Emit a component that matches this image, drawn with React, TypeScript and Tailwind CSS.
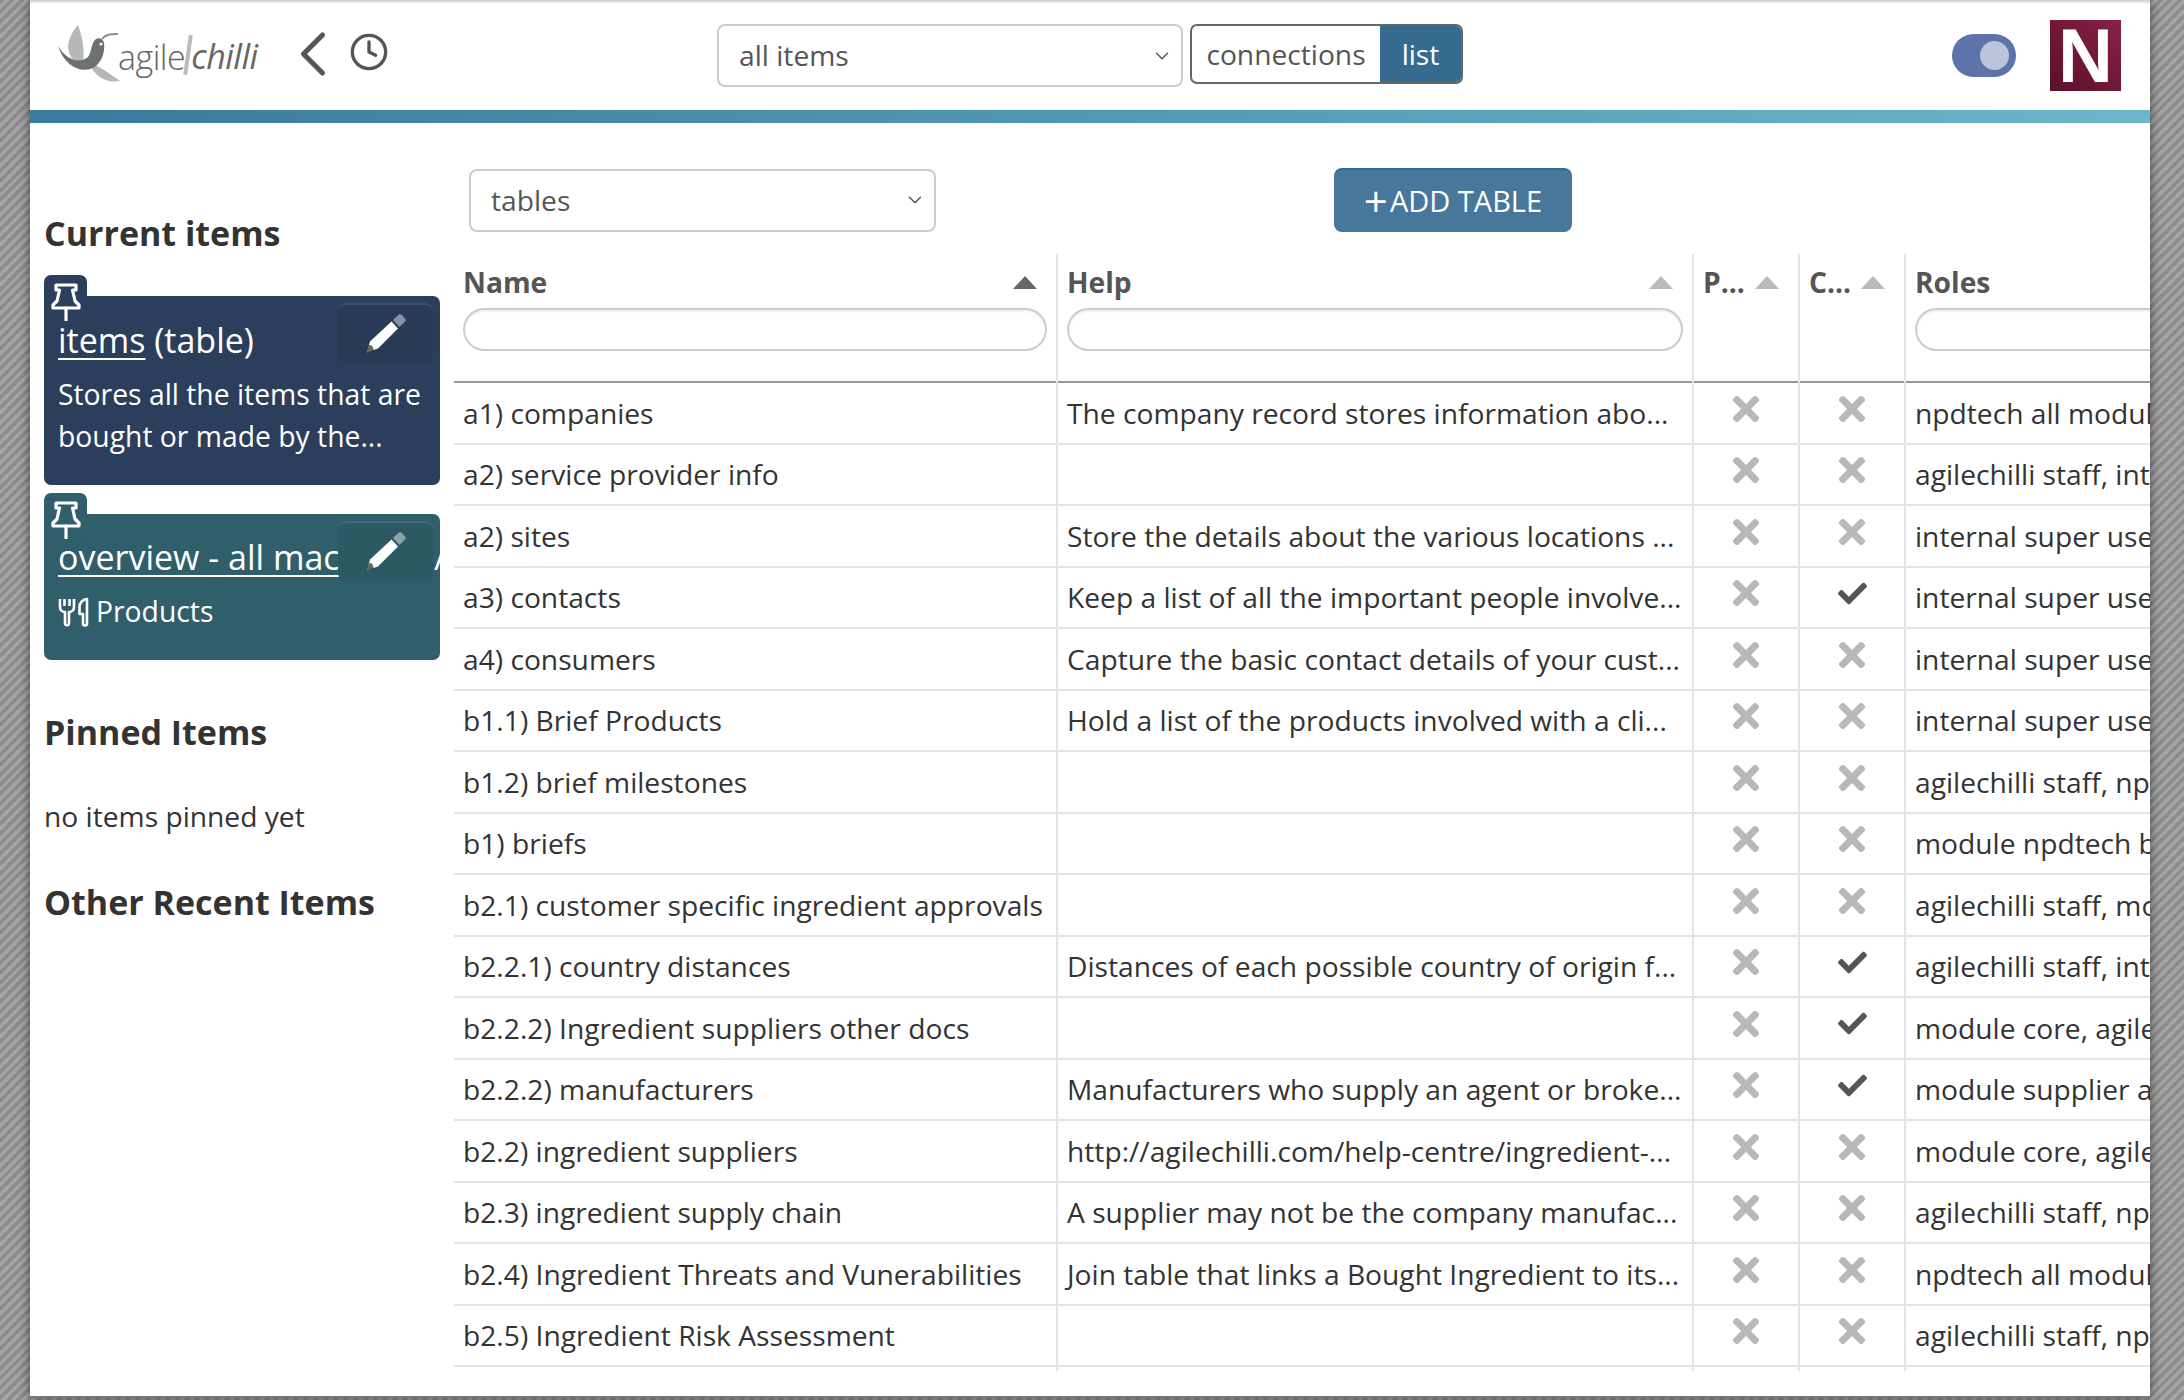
import { ChevronLeft, ChevronDown, Clock } from 'lucide-react';
import { FaCheck, FaTimes } from 'react-icons/fa';

type Row = { name: string; help: string; c?: boolean; roles: string };

const rows: Row[] = [
  { name: 'a1) companies', help: 'The company record stores information abo...', roles: 'npdtech all modules, agilechilli staff' },
  { name: 'a2) service provider info', help: '', roles: 'agilechilli staff, internal super user' },
  { name: 'a2) sites', help: 'Store the details about the various locations ...', roles: 'internal super user, module core' },
  { name: 'a3) contacts', help: 'Keep a list of all the important people involve...', c: true, roles: 'internal super user, module core' },
  { name: 'a4) consumers', help: 'Capture the basic contact details of your cust...', roles: 'internal super user, module core' },
  { name: 'b1.1) Brief Products', help: 'Hold a list of the products involved with a cli...', roles: 'internal super user, module core' },
  { name: 'b1.2) brief milestones', help: '', roles: 'agilechilli staff, npdtech all modules' },
  { name: 'b1) briefs', help: '', roles: 'module npdtech briefs, internal' },
  { name: 'b2.1) customer specific ingredient approvals', help: '', roles: 'agilechilli staff, module core' },
  { name: 'b2.2.1) country distances', help: 'Distances of each possible country of origin f...', c: true, roles: 'agilechilli staff, internal super user' },
  { name: 'b2.2.2) Ingredient suppliers other docs', help: '', c: true, roles: 'module core, agilechilli staff' },
  { name: 'b2.2.2) manufacturers', help: 'Manufacturers who supply an agent or broke...', c: true, roles: 'module supplier approval, internal' },
  { name: 'b2.2) ingredient suppliers', help: 'http://agilechilli.com/help-centre/ingredient-...', roles: 'module core, agilechilli staff' },
  { name: 'b2.3) ingredient supply chain', help: 'A supplier may not be the company manufac...', roles: 'agilechilli staff, npdtech all modules' },
  { name: 'b2.4) Ingredient Threats and Vunerabilities', help: 'Join table that links a Bought Ingredient to its...', roles: 'npdtech all modules, agilechilli staff' },
  { name: 'b2.5) Ingredient Risk Assessment', help: '', roles: 'agilechilli staff, npdtech all modules' },
];

function Logo() {
  return (
    <div className="flex items-center whitespace-nowrap">
      <svg width="66" height="60" viewBox="0 0 66 60" className="mt-[2px] shrink-0">
        <path d="M20 1C14 8 8 18 11 28C13 36 18 38 25 36C27 26 24 12 20 1Z" fill="#b5b7b8" />
        <path d="M30 38C42 42 52 50 62 57C50 59 38 55 30 38Z" fill="#b5b7b8" />
        <path d="M0 22C8 36 22 40 30 33C34 28 33 18 38 15C42 13 45 15 46 19C47 26 45 36 38 42C28 50 8 46 0 22Z" fill="#6e7172" />
        <path d="M44 15C47 11 51 10 60 10" stroke="#8a8c8d" strokeWidth="2" fill="none" />
        <circle cx="43" cy="20" r="1.5" fill="#fff" />
      </svg>
      <span className="ml-[-6px] mt-[8px] font-['Open_Sans'] text-[34px] font-light leading-none tracking-[-0.5px] text-[#666]">agile</span>
      <span className="mx-[1px] mt-[4px] h-[40px] w-[4px] shrink-0 rotate-[8deg] bg-[#bbb]" />
      <span className="mt-[6px] font-['Open_Sans'] text-[34px] italic leading-none tracking-[-0.5px] text-[#666]">chilli</span>
    </div>
  );
}

function Pin() {
  return (
    <svg width="30" height="38" viewBox="0 0 30 38" fill="none" stroke="#fff" strokeWidth="3.2" strokeLinejoin="round">
      <path d="M5 2H25V7H21.5L24 18L28 22V25H2V22L6 18L8.5 7H5Z" />
      <path d="M15 25V37" strokeLinecap="round" />
    </svg>
  );
}

function Pencil() {
  return (
    <svg width="40" height="40" viewBox="0 0 40 40">
      <path d="M27 6L33 0.5C34 0 35 0 36 1L39 4.5C40 5.5 40 6.5 39 7.5L33.5 13Z" fill="#fff" opacity="0.45" />
      <path d="M25.5 7.5L32 14.5L12 34.5L1 38.5L4 27.5Z" fill="#fff" />
      <path d="M1 38.5L3 31L6 31.5L8 36.5Z" fill="#000" opacity="0.6" />
    </svg>
  );
}

function EditButton({ bg }: { bg: string }) {
  return (
    <div className={`absolute right-[7px] top-[7px] flex h-[60px] w-[95px] items-center justify-center rounded-[8px] border-t-2 border-white/10 ${bg}`}>
      <Pencil />
    </div>
  );
}

function PinTab({ bg }: { bg: string }) {
  return (
    <div className={`absolute left-0 top-[-21px] flex h-[50px] w-[43px] justify-center rounded-[7px] pt-[8px] ${bg}`}>
      <Pin />
    </div>
  );
}

function Sidebar() {
  return (
    <aside className="w-[424px] shrink-0 pl-[14px] pr-[14px] text-[#333]">
      <h2 className="mt-[87px] text-[34px] font-bold leading-[46px]">Current items</h2>
      <div className="relative mt-[40px] h-[189px] rounded-[7px] bg-[#2b3e5b] px-[14px] pt-[21px] text-white">
        <PinTab bg="bg-[#2b3e5b]" />
        <EditButton bg="bg-[#283a55]" />
        <div className="whitespace-nowrap text-[34px] leading-[46px]">
          <span className="underline decoration-2 underline-offset-[5px]">items</span> (table)
        </div>
        <p className="mt-[10px] text-[28.3px] leading-[42px]">Stores all the items that are bought or made by the...</p>
      </div>
      <div className="relative mt-[29px] h-[146px] rounded-[7px] bg-[#305f6b]">
        <PinTab bg="bg-[#305f6b]" />
        <div className="h-full overflow-hidden px-[14px] pt-[20px] text-white">
          <div className="whitespace-nowrap text-[34px] leading-[46px]">
            <span className="underline decoration-2 underline-offset-[5px]">overview - all machines</span> / items
          </div>
          <div className="mt-[10px] flex items-center gap-[6px] text-[28.3px] leading-[43px]">
            <svg width="32" height="30" viewBox="0 0 32 30" fill="none" stroke="#fff" strokeWidth="2.6" strokeLinejoin="round">
              <path d="M2 2V10C2 13 4 15 7 15V26C7 29 11 29 11 26V15C14 15 16 13 16 10V2M6.5 2V9M11.5 2V9" />
              <path d="M29 2V27C29 29 25 29 25 27V17H21.5V10C21.5 6 25 2 29 2Z" />
            </svg>
            Products
          </div>
        </div>
        <EditButton bg="bg-[#2d5965]" />
      </div>
      <h2 className="mt-[49px] text-[34px] font-bold leading-[46px]">Pinned Items</h2>
      <p className="mt-[40px] text-[28.2px] leading-[43px]">no items pinned yet</p>
      <h2 className="mt-[41px] text-[34px] font-bold leading-[46px]">Other Recent Items</h2>
    </aside>
  );
}

function Select({ label, w }: { label: string; w: string }) {
  return (
    <div className={`flex h-[63px] items-center justify-between rounded-[8px] border-2 border-[#ccc] bg-white pl-[20px] pr-[8px] text-[28.2px] text-[#555] ${w}`}>
      {label}
      <ChevronDown size={22} strokeWidth={1.6} />
    </div>
  );
}

function SortHead({ label, dark }: { label: string; dark?: boolean }) {
  return (
    <div className="flex items-center justify-between pr-[10px]">
      <span>{label}</span>
      <span className={`h-0 w-0 border-x-[12px] border-b-[13px] border-x-transparent ${dark ? 'border-b-[#666]' : 'border-b-[#bbb]'}`} />
    </div>
  );
}

function FilterInput() {
  return <div className="mt-[5px] h-[43px] rounded-full border-2 border-[#ccc] bg-white shadow-[inset_0_2px_2px_rgba(0,0,0,0.06)]" />;
}

export default function App() {
  return (
    <div className="h-[1400px] overflow-hidden bg-[repeating-linear-gradient(135deg,#8c8c8c_0px,#8c8c8c_3.5px,#a4a4a4_3.5px,#a4a4a4_7px)] px-[30px] pb-[2px] font-['Open_Sans',sans-serif]">
      <div className="flex h-full w-[2120px] flex-col overflow-hidden border-b-2 border-[#777] bg-white shadow-[0_0_10px_rgba(0,0,0,0.55)]">
        <div className="h-[4px] shrink-0 bg-gradient-to-b from-[#ccc] to-white" />
        <header className="flex h-[106px] shrink-0 items-center">
          <div className="ml-[28px] mt-[-9px] w-[212px]">
            <Logo />
          </div>
          <ChevronLeft size={76} strokeWidth={1.6} className="ml-[5px] mt-[-6px] text-[#555]" />
          <Clock size={40} strokeWidth={2} className="ml-[-2px] mt-[-10px] text-[#555]" />
          <div className="ml-[328px] mt-[-3px] flex">
            <Select label="all items" w="w-[466px]" />
            <div className="ml-[7px] flex h-[60px] overflow-hidden rounded-[7px] border-2 border-[#666] text-[28.2px]">
              <span className="flex w-[188px] items-center justify-center text-[#555]">connections</span>
              <span className="flex w-[81px] items-center justify-center bg-[#366b90] text-white">list</span>
            </div>
          </div>
          <div className="ml-[489px] mt-[-3px] flex h-[43px] w-[64px] items-center justify-end rounded-full bg-[#5d73a9] pr-[7px]">
            <span className="h-[29px] w-[29px] rounded-full bg-[#bcc4dc]" />
          </div>
          <div className="ml-[34px] mt-[-3px] flex h-[71px] w-[71px] items-center justify-center bg-gradient-to-tr from-[#5c1028] to-[#872149]">
            <span className="font-['Liberation_Sans'] text-[76px] font-bold leading-none text-white">N</span>
          </div>
        </header>
        <div className="h-[13px] shrink-0 bg-gradient-to-r from-[#3a7a9c] to-[#6cb6c8]" />
        <div className="flex min-h-0 flex-1">
          <Sidebar />
          <main className="min-w-0 flex-1 overflow-hidden pt-[45px]">
            <div className="flex items-center pl-[15px]">
              <Select label="tables" w="w-[467px]" />
              <button className="ml-[398px] flex h-[64px] w-[238px] items-center justify-center gap-[2px] rounded-[8px] border-t-2 border-[#366b90] bg-[#47789c] text-[29px] text-white">
                <span className="text-[42px] leading-none">+</span>ADD TABLE
              </button>
            </div>
            <table className="mt-[22px] w-[1800px] table-fixed border-collapse text-[28.2px] text-[#333]">
              <colgroup>
                <col className="w-[603px]" />
                <col className="w-[636px]" />
                <col className="w-[106px]" />
                <col className="w-[106px]" />
                <col className="w-[349px]" />
              </colgroup>
              <thead className="text-left text-[#555]">
                <tr className="border-b-2 border-[#999] align-top">
                  <th className="h-[128px] border-r-2 border-[#e4e4e4] px-[9px] pt-[7px] font-bold">
                    <SortHead label="Name" dark />
                    <FilterInput />
                  </th>
                  <th className="border-r-2 border-[#e4e4e4] px-[9px] pt-[7px] font-bold">
                    <SortHead label="Help" />
                    <FilterInput />
                  </th>
                  <th className="border-r-2 border-[#e4e4e4] px-[9px] pt-[7px] font-bold">
                    <SortHead label="P..." />
                  </th>
                  <th className="border-r-2 border-[#e4e4e4] px-[9px] pt-[7px] font-bold">
                    <SortHead label="C..." />
                  </th>
                  <th className="px-[9px] pt-[7px] font-bold">
                    Roles
                    <FilterInput />
                  </th>
                </tr>
              </thead>
              <tbody>
                {rows.map((row) => (
                  <tr key={row.name} className="h-[61.5px] border-b-2 border-[#e4e4e4]">
                    <td className="overflow-hidden whitespace-nowrap border-r-2 border-[#e4e4e4] px-[9px]">{row.name}</td>
                    <td className="overflow-hidden whitespace-nowrap border-r-2 border-[#e4e4e4] px-[9px]">{row.help}</td>
                    <td className="border-r-2 border-[#e4e4e4]">
                      <FaTimes size={38} className="mx-auto mb-[8px] text-[#b8b8b8]" />
                    </td>
                    <td className="border-r-2 border-[#e4e4e4]">
                      {row.c ? (
                        <FaCheck size={29} className="mx-auto mb-[8px] text-[#555]" />
                      ) : (
                        <FaTimes size={38} className="mx-auto mb-[8px] text-[#b8b8b8]" />
                      )}
                    </td>
                    <td className="overflow-hidden whitespace-nowrap px-[9px]">{row.roles}</td>
                  </tr>
                ))}
                <tr className="h-[5px]">
                  <td className="border-r-2 border-[#e4e4e4]" />
                  <td className="border-r-2 border-[#e4e4e4]" />
                  <td className="border-r-2 border-[#e4e4e4]" />
                  <td className="border-r-2 border-[#e4e4e4]" />
                  <td />
                </tr>
              </tbody>
            </table>
          </main>
        </div>
      </div>
    </div>
  );
}
